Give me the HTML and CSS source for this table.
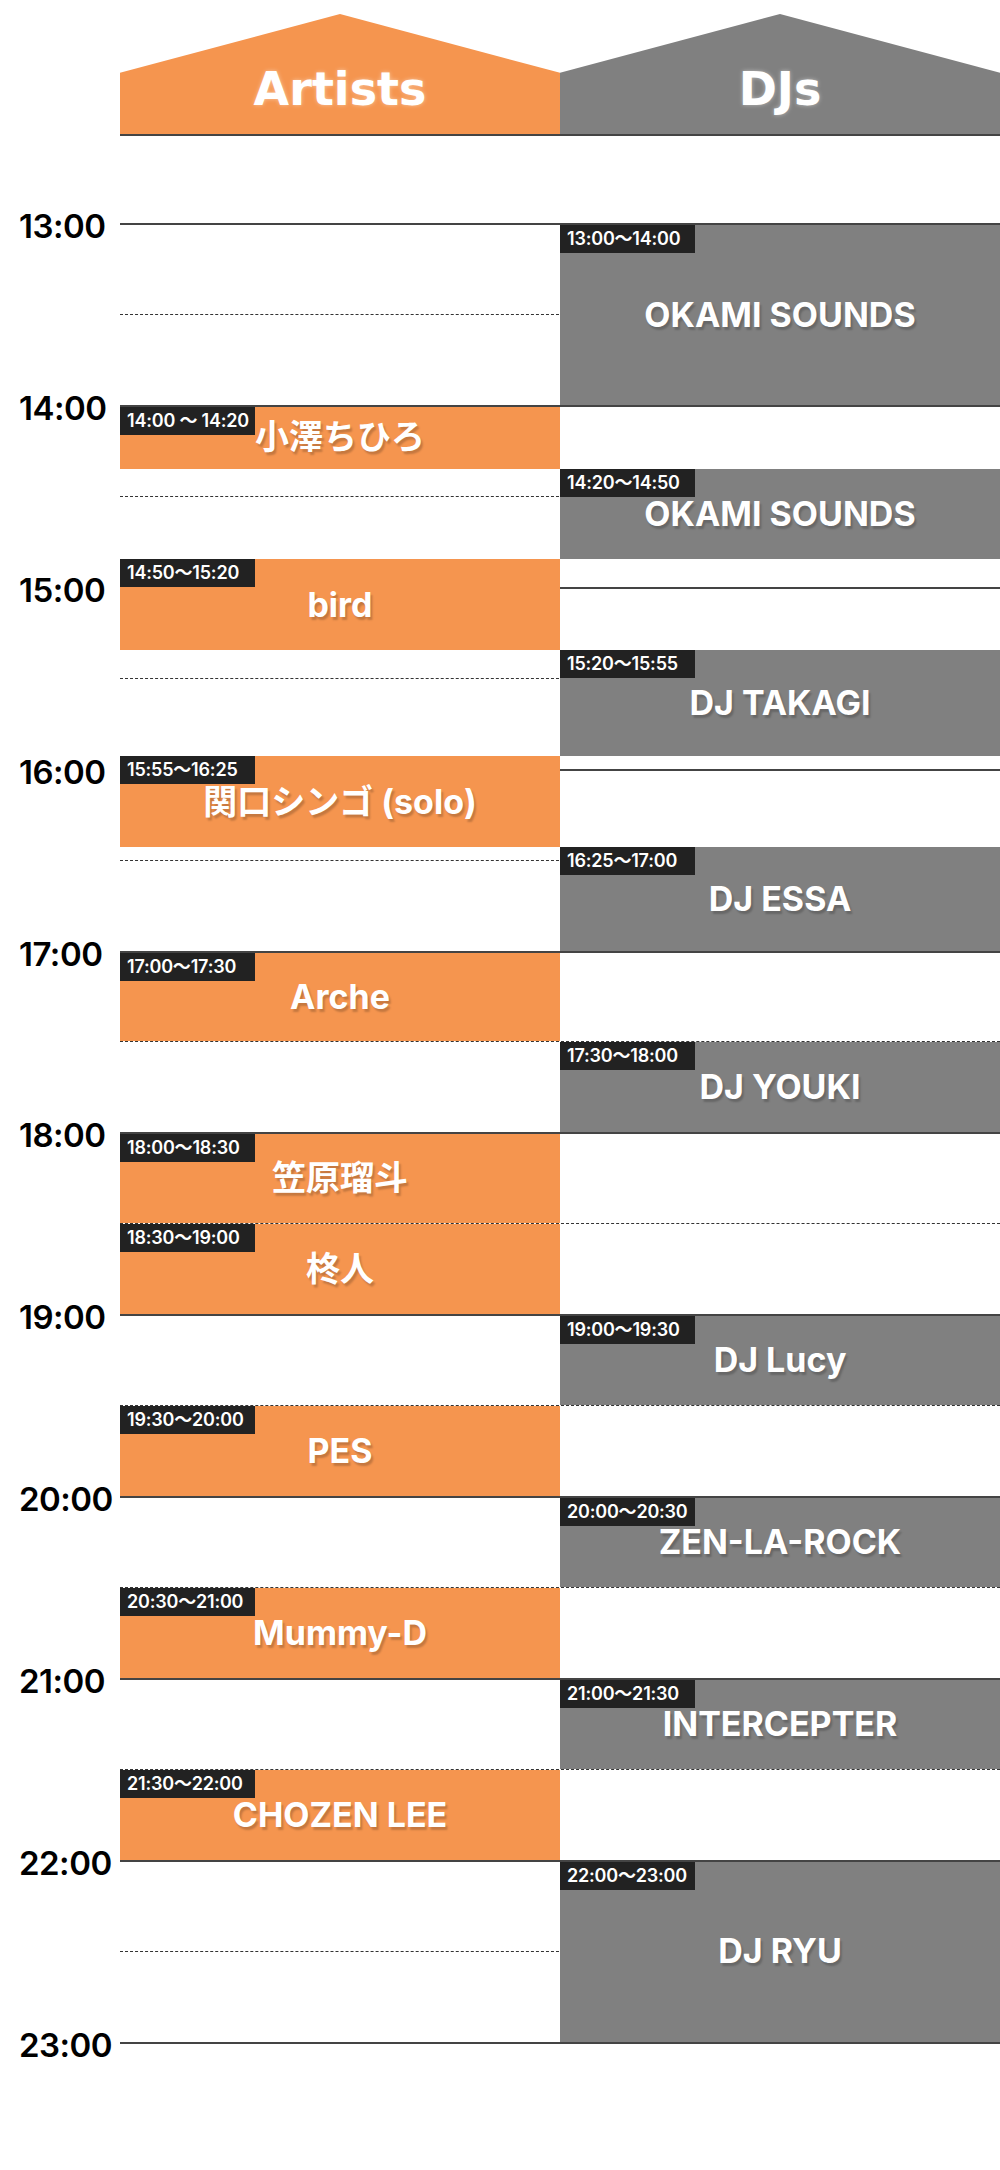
FILE: index.html
```html
<!DOCTYPE html>
<html lang="ja">
<head>
    <meta charset="UTF-8">
    <meta name="viewport" content="width=device-width, initial-scale=1.0">
    <title>Timetable</title>

    <!-- estilo -->
    <link rel="stylesheet" href="styles.css">
</head>
<body>
    <div class="page">
        <!-- stages -->
        <div class="stages">
            <div class="stage stage-artists">Artists</div>
            <div class="stage stage-djs">DJs</div>
        </div>

        <!-- timetable: one grid row = 5 min, 13:00 -> 23:00 -->
        <div class="timetable">
            <span class="time" style="grid-row: 1">13:00</span>
            <span class="time" style="grid-row: 13">14:00</span>
            <span class="time" style="grid-row: 25">15:00</span>
            <span class="time" style="grid-row: 37">16:00</span>
            <span class="time" style="grid-row: 49">17:00</span>
            <span class="time" style="grid-row: 61">18:00</span>
            <span class="time" style="grid-row: 73">19:00</span>
            <span class="time" style="grid-row: 85">20:00</span>
            <span class="time" style="grid-row: 97">21:00</span>
            <span class="time" style="grid-row: 109">22:00</span>
            <span class="time" style="grid-row: 121">23:00</span>

            <div class="line" style="grid-row: 1"></div>
            <div class="line line-half" style="grid-row: 7"></div>
            <div class="line" style="grid-row: 13"></div>
            <div class="line line-half" style="grid-row: 19"></div>
            <div class="line" style="grid-row: 25"></div>
            <div class="line line-half" style="grid-row: 31"></div>
            <div class="line" style="grid-row: 37"></div>
            <div class="line line-half" style="grid-row: 43"></div>
            <div class="line" style="grid-row: 49"></div>
            <div class="line line-half" style="grid-row: 55"></div>
            <div class="line" style="grid-row: 61"></div>
            <div class="line line-half" style="grid-row: 67"></div>
            <div class="line" style="grid-row: 73"></div>
            <div class="line line-half" style="grid-row: 79"></div>
            <div class="line" style="grid-row: 85"></div>
            <div class="line line-half" style="grid-row: 91"></div>
            <div class="line" style="grid-row: 97"></div>
            <div class="line line-half" style="grid-row: 103"></div>
            <div class="line" style="grid-row: 109"></div>
            <div class="line line-half" style="grid-row: 115"></div>
            <div class="line" style="grid-row: 121"></div>

            <!-- artists -->
            <div class="act act-artist from-hour nudge-end" style="grid-row: 13 / 17">
                <span class="tag">14:00 〜 14:20</span>小澤ちひろ
            </div>
            <div class="act act-artist nudge-top nudge-end" style="grid-row: 23 / 29">
                <span class="tag">14:50〜15:20</span>bird
            </div>
            <div class="act act-artist nudge-top nudge-end" style="grid-row: 36 / 42">
                <span class="tag">15:55〜16:25</span>関口シンゴ (solo)
            </div>
            <div class="act act-artist from-hour" style="grid-row: 49 / 55">
                <span class="tag">17:00〜17:30</span>Arche
            </div>
            <div class="act act-artist from-hour" style="grid-row: 61 / 67">
                <span class="tag">18:00〜18:30</span>笠原瑠斗
            </div>
            <div class="act act-artist from-half" style="grid-row: 67 / 73">
                <span class="tag">18:30〜19:00</span>柊人
            </div>
            <div class="act act-artist from-half" style="grid-row: 79 / 85">
                <span class="tag">19:30〜20:00</span>PES
            </div>
            <div class="act act-artist from-half" style="grid-row: 91 / 97">
                <span class="tag">20:30〜21:00</span>Mummy-D
            </div>
            <div class="act act-artist from-half" style="grid-row: 103 / 109">
                <span class="tag">21:30〜22:00</span>CHOZEN LEE
            </div>

            <!-- djs -->
            <div class="act act-dj from-hour" style="grid-row: 1 / 13">
                <span class="tag">13:00〜14:00</span>OKAMI SOUNDS
            </div>
            <div class="act act-dj nudge-top nudge-end" style="grid-row: 17 / 23">
                <span class="tag">14:20〜14:50</span>OKAMI SOUNDS
            </div>
            <div class="act act-dj nudge-top nudge-end" style="grid-row: 29 / 36">
                <span class="tag">15:20〜15:55</span>DJ TAKAGI
            </div>
            <div class="act act-dj nudge-top" style="grid-row: 42 / 49">
                <span class="tag">16:25〜17:00</span>DJ ESSA
            </div>
            <div class="act act-dj from-half" style="grid-row: 55 / 61">
                <span class="tag">17:30〜18:00</span>DJ YOUKI
            </div>
            <div class="act act-dj from-hour" style="grid-row: 73 / 79">
                <span class="tag">19:00〜19:30</span>DJ Lucy
            </div>
            <div class="act act-dj from-hour" style="grid-row: 85 / 91">
                <span class="tag">20:00〜20:30</span>ZEN-LA-ROCK
            </div>
            <div class="act act-dj from-hour" style="grid-row: 97 / 103">
                <span class="tag">21:00〜21:30</span>INTERCEPTER
            </div>
            <div class="act act-dj from-hour" style="grid-row: 109 / 121">
                <span class="tag">22:00〜23:00</span>DJ RYU
            </div>
        </div>
    </div>
</body>
</html>
```

FILE: styles.css
```css
body {
    margin: 0;
    background-color: #fff;
    color: #000;
    font-family: "Inter", "Noto Sans CJK JP", sans-serif;
}

.page {
    width: 1000px;
    padding-top: 14px;
    padding-bottom: 120px;
}

/* cabecera */
.stages {
    display: grid;
    grid-template-columns: 440px 440px;
    margin-left: 120px;
    border-bottom: 2px solid #444;
}

.stage {
    box-sizing: border-box;
    height: 120px;
    display: flex;
    justify-content: center;
    align-items: flex-end;
    padding-bottom: 22px;
    clip-path: polygon(0 49%, 50% 0, 100% 49%, 100% 100%, 0 100%);
    color: #fff;
    font: bold 46px/1 "DejaVu Sans", sans-serif;
    text-shadow: 0 0 4px rgba(255, 255, 255, 0.45);
}

.stage-artists {
    background-color: #f5954f;
}

.stage-djs {
    background-color: #808080;
}

/* tabla */
.timetable {
    display: grid;
    grid-template-columns: 120px 440px 440px;
    grid-template-rows: repeat(120, calc(182px / 12)) 2px;
    margin-top: 87px;
}

.time {
    grid-column: 1;
    align-self: start;
    padding-left: 19px;
    margin-top: 3px;
    transform: translateY(-50%);
    font: 600 33px/1 "Inter", sans-serif;
    letter-spacing: -0.5px;
    white-space: nowrap;
}

.line {
    grid-column: 2 / 4;
    align-self: start;
    border-top: 2px solid #444;
}

.line-half {
    border-top: 1px dashed #333;
}

.act {
    position: relative;
    display: flex;
    align-items: center;
    justify-content: center;
    color: #fff;
    font: 700 34px/1.2 "Inter", "Noto Sans CJK JP", sans-serif;
    text-shadow: 2px 3px 2px rgba(0, 0, 0, 0.2);
    white-space: nowrap;
}

.act-artist {
    grid-column: 2;
    background-color: #f5954f;
}

.act-dj {
    grid-column: 3;
    background-color: #808080;
}

.from-hour {
    margin-top: 2px;
}

.from-half {
    margin-top: 1px;
}

/* los cortes fuera de la media hora caen un poco mas abajo */
.nudge-top {
    margin-top: 3px;
}

.nudge-end {
    margin-bottom: -3px;
}

.tag {
    position: absolute;
    top: 0;
    left: 0;
    box-sizing: border-box;
    width: 135px;
    height: 28px;
    padding-left: 7px;
    background-color: #222;
    font: 600 18px/28px "Inter", "Noto Sans CJK JP", sans-serif;
    letter-spacing: -0.2px;
    text-shadow: none;
    white-space: nowrap;
}
```
